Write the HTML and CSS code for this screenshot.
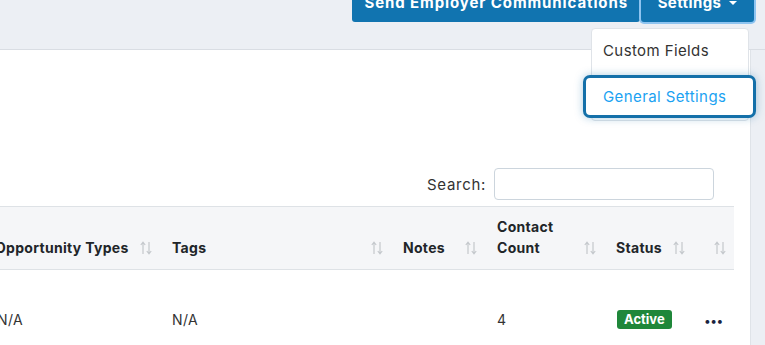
FILE: index.html
```html
<!DOCTYPE html>
<html lang="en">
<head>
    <meta charset="UTF-8">
    <meta name="viewport" content="width=device-width, initial-scale=1.0">
    <title>Employers</title>
    <link rel="stylesheet" href="styles.css">
</head>
<body>
    <div class="page">
        <div class="topbar">
            <button class="btn">Send Employer Communications</button>
            <div class="settings">
                <button class="btn btn-focus">Settings <span class="caret"></span></button>
                <div class="menu">
                    <a class="menu-item">Custom Fields</a>
                    <a class="menu-item active">General Settings</a>
                </div>
            </div>
        </div>

        <div class="main">
            <div class="panel">
                <div class="search">
                    <label>Search:</label>
                    <input type="text">
                </div>

                <table class="grid">
                    <colgroup>
                        <col style="width:175px">
                        <col style="width:231px">
                        <col style="width:94px">
                        <col style="width:119px">
                        <col style="width:89px">
                        <col style="width:41px">
                    </colgroup>
                    <thead>
                        <tr>
                            <th><div class="th">Opportunity Types <span class="sort"></span></div></th>
                            <th><div class="th">Tags <span class="sort"></span></div></th>
                            <th><div class="th">Notes <span class="sort"></span></div></th>
                            <th><div class="th">Contact<br>Count <span class="sort"></span></div></th>
                            <th><div class="th">Status <span class="sort"></span></div></th>
                            <th><div class="th"><span></span><span class="sort"></span></div></th>
                        </tr>
                    </thead>
                    <tbody>
                        <tr>
                            <td>N/A</td>
                            <td>N/A</td>
                            <td></td>
                            <td>4</td>
                            <td><span class="badge">Active</span></td>
                            <td><span class="dots">&bull;&bull;&bull;</span></td>
                        </tr>
                    </tbody>
                </table>
            </div>
        </div>
    </div>

    <script>
        // sort arrows for every header
        const icon = `<svg width="12" height="14" viewBox="0 0 12 14"><path d="M3 13V1.5M0.8 4L3 1.2 5.2 4M9 1V12.5M6.8 10L9 12.8 11.2 10" fill="none" stroke="#c4c8cc" stroke-width="1.2"/></svg>`;
        document.querySelectorAll('.sort').forEach(el => el.innerHTML = icon);
    </script>
</body>
</html>
```

FILE: styles.css
```css
*{
    margin: 0;
    padding: 0;
    box-sizing: border-box;
    list-style: none;
}

body{
    background: #eceff4;
    font-family: "Inter", "Noto Sans", sans-serif;
    color: #212529;
    overflow: hidden;
}

.page{
    margin-top: -18px;
}

.topbar{
    height: 68px;
    display: flex;
    justify-content: flex-end;
    align-items: flex-start;
    gap: 1px;
    padding-right: 11px;
    border-bottom: 1px solid #d9dde3;
}

.btn{
    height: 40px;
    background: #1174b0;
    color: #fff;
    border: none;
    border-radius: 3px;
    font-family: inherit;
    font-size: 15px;
    font-weight: 700;
    letter-spacing: 0.9px;
    padding: 0 12px;
}

.settings{
    position: relative;
}

.btn-focus{
    width: 113px;
    letter-spacing: 0.4px;
    box-shadow: 0 0 0 2px #8ec4f0;
    display: flex;
    align-items: center;
    justify-content: center;
    gap: 8px;
}

.caret{
    border-left: 4px solid transparent;
    border-right: 4px solid transparent;
    border-top: 4px solid #fff;
    margin-top: 2px;
}

.menu{
    position: absolute;
    top: 46px;
    right: 5px;
    width: 158px;
    background: #fff;
    border: 1px solid #dfe3e8;
    border-radius: 4px;
    z-index: 5;
}

.menu-item{
    display: block;
    font-size: 15px;
    letter-spacing: 0.4px;
    color: #333;
    line-height: 44px;
    padding-left: 11px;
}

.menu-item.active{
    color: #1aa2f2;
    line-height: 37px;
    margin: 2px -8px 2px -9px;
    padding-left: 17px;
    border: 3px solid #1470a9;
    border-radius: 7px;
    box-shadow: 0 0 8px rgba(20, 112, 169, 0.35);
    background: #fff;
}

.main{
    display: flex;
    height: 300px;
}

.panel{
    width: 751px;
    background: #fff;
    border-right: 1px solid #dfe3e8;
    padding-top: 118px;
}

.search{
    display: flex;
    justify-content: flex-end;
    align-items: center;
    gap: 8px;
    padding-right: 36px;
    font-size: 15px;
    letter-spacing: 0.7px;
    color: #333;
}

.search input{
    width: 220px;
    height: 32px;
    border: 1px solid #ccd5dd;
    border-radius: 4px;
}

.grid{
    margin-top: 6px;
    margin-left: -15px;
    width: 749px;
    table-layout: fixed;
    border-collapse: collapse;
}

.grid thead tr{
    background: #f5f6f8;
    border-top: 1px solid #dee2e6;
    border-bottom: 1px solid #dee2e6;
}

.grid th{
    font-size: 14px;
    font-weight: 700;
    letter-spacing: 0.3px;
    text-align: left;
    line-height: 21px;
    padding: 9px 8px 11px 12px;
    vertical-align: bottom;
}

.th{
    display: flex;
    justify-content: space-between;
    align-items: flex-end;
    white-space: nowrap;
}

.grid th:first-child{
    padding-left: 10px;
}

.sort{
    display: flex;
    padding-bottom: 3px;
}

.grid td{
    font-size: 14px;
    letter-spacing: 0.4px;
    color: #333;
    padding: 40px 12px;
    vertical-align: middle;
}

.badge{
    display: inline-block;
    background: #1f873a;
    color: #fff;
    font-size: 13px;
    font-weight: 700;
    letter-spacing: 0;
    line-height: 17px;
    padding: 1px 7px 1px 7px;
    margin-left: 1px;
    border-radius: 3px;
}

.dots{
    font-size: 12px;
    color: #1a2340;
    letter-spacing: -0.5px;
    margin-left: -1px;
}
```
